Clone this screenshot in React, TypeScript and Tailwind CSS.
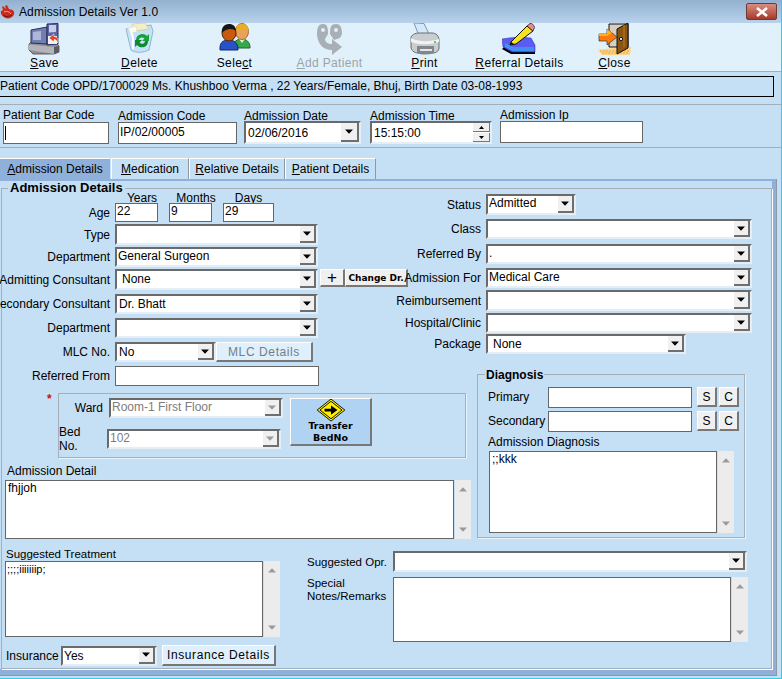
import React from "react";

const Arrow = ({ up = false, gray = false }: { up?: boolean; gray?: boolean }) => (
  <svg width="8" height="5" viewBox="0 0 8 5" className={up ? "rotate-180" : ""}>
    <path d="M0 0.5H8L4 4.8Z" fill={gray ? "#9a9a9a" : "#000"} />
  </svg>
);

function Combo({ className = "", children, disabled = false, btn = "w-[16px]", text = "pl-[1px]" }: { className?: string; children?: React.ReactNode; disabled?: boolean; btn?: string; text?: string }) {
  return (
    <div className={`flex h-[20px] shrink-0 border-2 border-t-[#6a6a6a] border-l-[#6a6a6a] border-r-[#e6eef5] border-b-[#e6eef5] bg-white ${className}`}>
      <div className={`flex-1 overflow-hidden whitespace-nowrap leading-[15px] ${text} ${disabled ? "text-[#7d7d7d]" : "text-black"}`}>{children}</div>
      <div className={`flex items-center justify-center bg-[#f0f0f0] border-r-2 border-b-2 border-[#6f6f6f] ${btn}`}>
        <Arrow gray={disabled} />
      </div>
    </div>
  );
}

function Input({ className = "", children }: { className?: string; children?: React.ReactNode }) {
  return (
    <div className={`shrink-0 border border-[#666] bg-white pl-[1px] leading-[15px] whitespace-nowrap overflow-hidden ${className}`}>{children}</div>
  );
}

function Btn({ className = "", children }: { className?: string; children?: React.ReactNode }) {
  return (
    <div className={`flex shrink-0 items-center justify-center border-t border-l border-white border-r-2 border-b-2 border-r-[#777] border-b-[#777] ${className}`}>{children}</div>
  );
}

function Scroll({ className = "" }: { className?: string }) {
  return (
    <div className={`flex w-[16px] shrink-0 flex-col items-center justify-between bg-[#ececec] py-[7px] ${className}`}>
      <Arrow up gray />
      <Arrow gray />
    </div>
  );
}

function Row({ label, className = "", lw = "w-[108px]", children }: { label: string; className?: string; lw?: string; children: React.ReactNode }) {
  return (
    <div className={`flex items-center ${className}`}>
      <div className={`flex shrink-0 justify-end whitespace-nowrap ${lw}`}>{label}</div>
      <div className="ml-[5px] flex shrink-0 items-stretch">{children}</div>
    </div>
  );
}

const SaveIcon = () => (
  <svg width="33" height="32" viewBox="0 0 33 32">
    <path d="M1 21L6 17H26L31 23V29L26 31H5L1 27Z" fill="#8f8f95" stroke="#44444c" strokeWidth=".8" />
    <path d="M1 21.5L26 24V31L1 27Z" fill="#b3b3b8" />
    <path d="M26 24L31 23V29L26 31Z" fill="#5b5b63" />
    <path d="M3 7L19 4V21L3 20Z" fill="#6f7fb2" stroke="#2b2f55" />
    <path d="M5 9L13 8V17L5 17Z" fill="#aeb7d8" />
    <path d="M19 1L30 0.5V21L19 22Z" fill="#5a66a8" stroke="#2a2d58" />
    <path d="M21 2H28V9L21 9.5Z" fill="#c9cde3" />
    <path d="M20 13H29V21H20Z" fill="#eef0f7" />
    <path d="M21 15L26 11V13.5C30 13.5 31 17 29.5 20C29 17.5 28 16.5 26 16.5V19Z" fill="#e0451f" stroke="#fff" strokeWidth=".5" />
  </svg>
);
const BinIcon = () => (
  <svg width="29" height="30" viewBox="0 0 29 30">
    <path d="M1 6L26 2L28 8L24 27C18 30 10 30 6 27Z" fill="#c5e2f7" stroke="#8fb6d6" />
    <path d="M7 1L20 0L24 6L10 8Z" fill="#f7efc4" stroke="#c9c48d" strokeWidth=".6" />
    <path d="M3 5L11 3L12 9L5 10Z" fill="#fbfbf2" stroke="#c8d2d8" strokeWidth=".5" />
    <path d="M6 9C9 14 8 20 8 26" stroke="#fff" strokeWidth="2" fill="none" />
    <path d="M11 17C11 11 19 9 22 13L24 11V18H17L19.5 15.5C17 13.5 14 15 14 17Z" fill="#18a33a" />
    <path d="M23 18C23 25 15 26 12 22L10 24V17H17L14.5 19.5C17 22 20 20.5 20 18Z" fill="#0e8a2f" />
  </svg>
);
const PeopleIcon = () => (
  <svg width="32" height="28" viewBox="0 0 32 28">
    <path d="M14 24C14 18 19 16 23 16C27 16 31 19 31 24V25H14Z" fill="#38a84a" stroke="#1c6a2c" />
    <path d="M20 16L23 20L26 16Z" fill="#dff2d8" />
    <ellipse cx="23" cy="8.5" rx="6.5" ry="8" fill="#e9a25a" stroke="#a86a28" />
    <path d="M17 8C17 3 20 1 23 1C27 1 29.5 3.5 29.5 8C27 5 21 5 17 8Z" fill="#e8b020" />
    <path d="M1 25C1 18 6 17 10 17C15 17 19 20 19 26V27H1Z" fill="#2a52c8" stroke="#14266e" />
    <ellipse cx="10" cy="10" rx="7" ry="8" fill="#c85a10" stroke="#53270a" />
    <path d="M3 10C2 4 6 1 10 1C14 1 17 3.5 17 8C14 5 7 5 3 10Z" fill="#161616" />
  </svg>
);
const AddIcon = () => (
  <svg width="28" height="32" viewBox="0 0 28 32">
    <path d="M1 12C1 5 2 1 7 1C12 1 12 6 12 11L9 16C9 19 12 21 16 21V16L26 24L16 32V27C8 27 2 22 1 12Z" fill="#a9b0b5" />
    <path d="M14 11C14 4 15 1 20 1C25 1 26 6 26 11L24 15L18 17Z" fill="#a9b0b5" />
    <circle cx="7" cy="7" r="2" fill="#e4eef5" />
    <circle cx="20" cy="7" r="2" fill="#e4eef5" />
  </svg>
);
const PrintIcon = () => (
  <svg width="30" height="32" viewBox="0 0 30 32">
    <path d="M4 0L14 0.5L20 13H9Z" fill="#d4e8fb" stroke="#7d97ad" />
    <path d="M1 15C1 12 5 10 9 10H22C26 10 29 13 29 17V25C29 28 26 30 23 30H8C4 30 1 27 1 24Z" fill="#c9cdd0" stroke="#6a6f73" />
    <path d="M1 15C8 19 20 19 29 16V19C20 22 9 22 1 19Z" fill="#f0f2f3" />
    <path d="M7 23H24V30C18 32 12 32 7 30Z" fill="#80868b" />
    <path d="M10 26H22V28H10Z" fill="#e3e5e6" />
    <circle cx="25" cy="19" r="1" fill="#3ab54a" />
  </svg>
);
const ReferralIcon = () => (
  <svg width="35" height="32" viewBox="0 0 35 32">
    <path d="M0 26L9 31H33V26H12L4 22Z" fill="#000" />
    <path d="M0 16L7 15L17 14L29 15L33 22V29H10L1 24Z" fill="#5a5cf2" stroke="#2a2ab4" strokeWidth=".5" />
    <path d="M3 21L11 25H32M3 23L11 27H32" stroke="#2cc1f7" strokeWidth="1" fill="none" />
    <path d="M9 19L25 3L31 8L14 21L8 22Z" fill="#f7e21f" stroke="#111" strokeWidth="1" />
    <path d="M25 3L28 0.5C30 0 32 2 32.5 4.5L31 8Z" fill="#f08a8a" stroke="#111" strokeWidth=".7" />
    <path d="M8 22L9 19L12 21Z" fill="#111" />
  </svg>
);
const CloseIcon = () => (
  <svg width="33" height="32" viewBox="0 0 33 32">
    <path d="M0 27L4 32H32L33 24H22Z" fill="#fbd48a" />
    <path d="M2 28H31M4 30H30" stroke="#f1a23c" strokeWidth="1" strokeDasharray="2 1" />
    <path d="M11 1H30V24H11Z" fill="#d8cfc1" stroke="#111" />
    <path d="M19 6L30 0V25L19 31Z" fill="#8b5510" stroke="#111" />
    <path d="M26 2V24" stroke="#b87d24" />
    <circle cx="23" cy="16" r="1.6" fill="#fff" stroke="#111" />
    <path d="M1 11H9V6L19 14L9 22V18H1Z" fill="#fb7a0c" stroke="#333" strokeWidth=".7" />
    <path d="M1 11H9V6L14 10L9 13H1Z" fill="#fdb021" />
  </svg>
);
const HeartIcon = () => (
  <svg width="15" height="14" viewBox="0 0 15 14">
    <path d="M1 6C0 10 4 13 8 13.5C12 13 15 10 14 7C13 4 11 5 9 4L7 0L5 1L6 4L3 1L2 2L3 5Z" fill="#c92a1e" />
    <path d="M4 7C6 6 9 6 11 9" stroke="#f5b5a0" fill="none" />
    <path d="M3 10C5 12 9 12 12 10" stroke="#7a120c" fill="none" />
  </svg>
);
const SignIcon = () => (
  <svg width="32" height="25" viewBox="0 0 32 25">
    <path d="M16 0L31 12L16 24L1 12Z" fill="#ffee00" stroke="#000" />
    <path d="M16 2.5L28 12L16 21.5L4 12Z" fill="none" stroke="#000" />
    <path d="M9 10.5H16V7L23 12L16 17V13.5H9Z" fill="#000" />
  </svg>
);

const tools: { icon: React.ReactNode; pre: string; u: string; post: string; muted?: boolean }[] = [
  { icon: <SaveIcon />, pre: "", u: "S", post: "ave" },
  { icon: <BinIcon />, pre: "", u: "D", post: "elete" },
  { icon: <PeopleIcon />, pre: "Sele", u: "c", post: "t" },
  { icon: <AddIcon />, pre: "", u: "A", post: "dd Patient", muted: true },
  { icon: <PrintIcon />, pre: "", u: "P", post: "rint" },
  { icon: <ReferralIcon />, pre: "", u: "R", post: "eferral Details" },
  { icon: <CloseIcon />, pre: "", u: "C", post: "lose" },
];

export default function App() {
  return (
    <div className="flex h-[679px] w-[782px] flex-col overflow-hidden border-r border-b border-r-[#2fd0e6] border-b-[#2fd0e6] bg-[#c5dff4] font-['Liberation_Sans',Arial,sans-serif] text-[12px] leading-[14px] text-black">
      {/* title bar */}
      <div className="flex h-[23px] shrink-0 items-center bg-gradient-to-b from-[#94b0cf] to-[#b8d2ec]">
        <HeartIcon />
        <span className="ml-[4px] text-[12px] tracking-[0.1px]">Admission Details Ver 1.0</span>
        <div className="ml-auto mr-[4px] flex h-[17px] w-[31px] items-center justify-center rounded-[2px] border border-[#6b3a36] bg-gradient-to-b from-[#d98c80] to-[#a63a2c]">
          <svg width="14" height="10" viewBox="0 0 14 10"><path d="M2 1L12 9M12 1L2 9" stroke="#fff" strokeWidth="2.6" /></svg>
        </div>
      </div>

      {/* toolbar */}
      <div className="flex h-[49px] shrink-0 border-b border-b-[#a5aeb6] bg-[#e0f1fc] pl-[-3px]">
        <div className="-ml-[3px] flex">
          {tools.map((t) => (
            <div key={t.post} className="flex w-[95px] flex-col items-center">
              <div className="flex h-[32px] items-start">{t.icon}</div>
              <div className={`mt-[1px] whitespace-nowrap tracking-[0.35px] ${t.muted ? "text-[#9aa3a8]" : ""}`}>
                {t.pre}<u>{t.u}</u>{t.post}
              </div>
            </div>
          ))}
        </div>
      </div>

      {/* patient strip */}
      <div className="h-[33px] shrink-0 border-b border-b-[#a5aeb6] pt-[4px]">
        <div className="-ml-[1px] flex h-[21px] w-[775px] items-center border border-black pb-[2px] whitespace-nowrap">
          Patient Code OPD/1700029 Ms. Khushboo Verma , 22 Years/Female, Bhuj, Birth Date 03-08-1993
        </div>
      </div>

      {/* top fields */}
      <div className="flex h-[43px] shrink-0 border-b border-b-[#a5aeb6] pl-[3px]">
        <div className="flex w-[115px] shrink-0 flex-col pt-[3px]">
          <div className="h-[14px]">Patient Bar Code</div>
          <Input className="h-[22px] w-[106px]"><span className="mt-[3px] block h-[14px] w-[1px] bg-black" /></Input>
        </div>
        <div className="flex w-[126px] shrink-0 flex-col pt-[4px]">
          <div className="h-[13px]">Admission Code</div>
          <Input className="h-[22px] w-[119px] pt-[2px]">IP/02/00005</Input>
        </div>
        <div className="flex w-[126px] shrink-0 flex-col pt-[4px]">
          <div className="h-[12px]">Admission Date</div>
          <Combo className="h-[23px] w-[117px]" text="pl-[2px] pt-[3px]" btn="w-[18px]">02/06/2016</Combo>
        </div>
        <div className="flex w-[130px] shrink-0 flex-col pt-[4px]">
          <div className="h-[12px]">Admission Time</div>
          <div className="flex h-[23px] w-[122px] border-2 border-t-[#6a6a6a] border-l-[#6a6a6a] border-r-[#e6eef5] border-b-[#e6eef5] bg-white">
            <div className="flex-1 pl-[2px] pt-[3px]">15:15:00</div>
            <div className="flex w-[17px] flex-col gap-[1px]">
              <div className="flex flex-1 items-center justify-center border-r border-b border-[#777] bg-[#f0f0f0]"><svg width="5" height="3" viewBox="0 0 5 3"><path d="M0 3H5L2.5 0Z" /></svg></div>
              <div className="flex flex-1 items-center justify-center border-r border-b border-[#777] bg-[#f0f0f0]"><svg width="5" height="3" viewBox="0 0 5 3"><path d="M0 0H5L2.5 3Z" /></svg></div>
            </div>
          </div>
        </div>
        <div className="flex shrink-0 flex-col pt-[3px]">
          <div className="h-[13px]">Admission Ip</div>
          <Input className="h-[22px] w-[143px]" />
        </div>
      </div>

      {/* tabs */}
      <div className="mt-[10px] flex h-[21px] shrink-0">
        <div className="flex w-[110px] items-center justify-center border-t border-t-white bg-[#8fb0da]"><span><u>A</u>dmission Details</span></div>
        <div className="ml-[1px] flex w-[78px] items-center justify-center border-t border-l border-r border-t-white border-l-white border-r-[#8d98a3]"><span><u>M</u>edication</span></div>
        <div className="flex w-[96px] items-center justify-center border-t border-l border-r border-t-white border-l-white border-r-[#8d98a3]"><span><u>R</u>elative Details</span></div>
        <div className="flex w-[91px] items-center justify-center border-t border-l border-r border-t-white border-l-white border-r-[#8d98a3]"><span><u>P</u>atient Details</span></div>
      </div>

      {/* tab page */}
      <div className="h-[497px] w-[777px] shrink-0 border-r border-b border-r-[#8d98a3] border-b-[#8d98a3]">
        <div className="h-[496px] border-t-2 border-r-[4px] border-b-[6px] border-[#8fb0da] pt-[7px]">
          <div className="relative ml-[1px] h-[481px] w-[771px] border border-[#a4afba] shadow-[1px_1px_0_#fff]">
            <div className="absolute -top-[8px] left-[6px] bg-[#c5dff4] px-[2px] text-[13px] font-bold">Admission Details</div>

            <div className="flex">
              {/* left column */}
              <div className="w-[470px] shrink-0">
                <div className="flex h-[14px] pl-[113px] pt-[2px]">
                  <div className="w-[54px] text-center">Years</div>
                  <div className="w-[54px] text-center">Months</div>
                  <div className="w-[51px] text-center">Days</div>
                </div>
                <div className="flex h-[19px] items-center">
                  <div className="flex w-[108px] justify-end">Age</div>
                  <Input className="ml-[5px] h-[19px] w-[43px]">22</Input>
                  <Input className="ml-[11px] h-[19px] w-[43px]">9</Input>
                  <Input className="ml-[11px] h-[19px] w-[51px]">29</Input>
                </div>
                <Row label="Type" className="mt-[2px]"><Combo className="h-[21px] w-[203px]" /></Row>
                <Row label="Department" className="mt-[2px]"><Combo className="w-[203px]">General Surgeon</Combo></Row>
                <Row label="Admitting Consultant" className="mt-[2px] h-[21px]">
                  <Combo className="h-[21px] w-[203px]" text="pl-[5px] pt-[1px]">None</Combo>
                  <Btn className="ml-[2px] h-[18px] w-[25px] bg-[#f0f0f0]"><span className="text-[17px] leading-[16px]">+</span></Btn>
                  <Btn className="h-[18px] w-[63px] bg-[#f0f0f0] font-['DejaVu_Sans',sans-serif] text-[9px] font-bold">Change Dr.</Btn>
                </Row>
                <Row label="Secondary Consultant" className="mt-[4px]"><Combo className="w-[203px]" text="pl-[2px] pt-[1px]">Dr. Bhatt</Combo></Row>
                <Row label="Department" className="mt-[4px]"><Combo className="w-[203px]" /></Row>
                <Row label="MLC No." className="mt-[4px]">
                  <Combo className="w-[101px]" text="pl-[2px] pt-[1px]">No</Combo>
                  <Btn className="h-[20px] w-[97px] bg-[#dfeffb] tracking-[0.6px] text-[#6f7f8c]">MLC Details</Btn>
                </Row>
                <Row label="Referred From" className="mt-[4px]"><Input className="h-[20px] w-[204px]" /></Row>

                <div className="relative ml-[56px] mt-[7px] h-[65px] w-[408px] border border-[#a4afba] shadow-[1px_1px_0_#e8f2fa]">
                  <div className="absolute -left-[12px] -top-[1px] text-[12px] font-bold leading-[12px] text-[#d01010]">*</div>
                  <div className="flex pt-[4px]">
                    <div className="w-[224px] shrink-0">
                      <div className="flex items-center">
                        <div className="flex w-[44px] justify-end">Ward</div>
                        <Combo disabled className="ml-[6px] w-[174px]" text="pl-[1px]">Room-1 First Floor</Combo>
                      </div>
                      <div className="mt-[7px] flex items-center">
                        <div className="flex w-[43px] justify-end">Bed No.</div>
                        <Combo disabled className="ml-[5px] w-[174px]" text="pl-[1px]">102</Combo>
                      </div>
                    </div>
                    <Btn className="ml-[7px] h-[48px] w-[82px] flex-col bg-[#b0d3f3] font-['DejaVu_Sans',sans-serif] text-[9.5px] font-bold leading-[12px]">
                      <SignIcon />
                      <span className="-mt-[2px] text-center">Transfer<br />BedNo</span>
                    </Btn>
                  </div>
                </div>

                <div className="ml-[5px] mt-[6px] h-[14px]">Admission Detail</div>
                <div className="ml-[3px] mt-[2px] flex h-[59px]">
                  <Input className="w-[449px]"><span className="pl-[1px]">fhjjoh</span></Input>
                  <Scroll className="ml-[1px]" />
                </div>
              </div>

              {/* right column */}
              <div className="-ml-[62px] w-[350px] shrink-0">
                <Row label="Status" lw="w-[71px]" className="mt-[5px]"><Combo className="h-[21px] w-[90px]">Admitted</Combo></Row>
                <Row label="Class" lw="w-[71px]" className="mt-[4px]"><Combo className="w-[266px]" /></Row>
                <Row label="Referred By" lw="w-[71px]" className="mt-[5px]"><Combo className="w-[266px]">.</Combo></Row>
                <Row label="Admission For" lw="w-[71px]" className="mt-[4px]"><Combo className="w-[266px]">Medical Care</Combo></Row>
                <Row label="Reimbursement" lw="w-[71px]" className="mt-[2px]"><Combo className="h-[21px] w-[266px]" /></Row>
                <Row label="Hospital/Clinic" lw="w-[71px]" className="mt-[2px]"><Combo className="w-[266px]" /></Row>
                <Row label="Package" lw="w-[71px]" className="mt-[1px]"><Combo className="w-[200px]" text="pl-[5px] pt-[1px]">None</Combo></Row>

                <div className="relative ml-[67px] mt-[20px] h-[164px] w-[268px] border border-[#a4afba] shadow-[1px_1px_0_#e8f2fa]">
                  <div className="absolute -top-[7px] left-[7px] bg-[#c5dff4] px-[1px] font-bold">Diagnosis</div>
                  <div className="mt-[12px] flex items-start">
                    <div className="ml-[10px] w-[60px] pt-[3px]">Primary</div>
                    <Input className="h-[21px] w-[144px]" />
                    <Btn className="ml-[5px] h-[20px] w-[20px] bg-[#f0f0f0]">S</Btn>
                    <Btn className="ml-[2px] h-[20px] w-[20px] bg-[#f0f0f0]">C</Btn>
                  </div>
                  <div className="mt-[3px] flex items-start">
                    <div className="ml-[10px] w-[60px] pt-[3px]">Secondary</div>
                    <Input className="h-[21px] w-[144px]" />
                    <Btn className="ml-[5px] h-[20px] w-[20px] bg-[#f0f0f0]">S</Btn>
                    <Btn className="ml-[2px] h-[20px] w-[20px] bg-[#f0f0f0]">C</Btn>
                  </div>
                  <div className="ml-[10px] mt-[3px] h-[14px]">Admission Diagnosis</div>
                  <div className="ml-[11px] mt-[2px] flex h-[82px]">
                    <Input className="w-[228px]"><span className="pl-[1px]">;;kkk</span></Input>
                    <Scroll className="ml-[1px]" />
                  </div>
                </div>
              </div>
            </div>

            {/* bottom section */}
            <div className="flex">
              <div className="w-[305px] shrink-0">
                <div className="ml-[4px] mt-[8px] h-[14px] text-[11.5px]">Suggested Treatment</div>
                <div className="ml-[3px] flex h-[76px]">
                  <Input className="w-[258px] text-[11px]">;;;;iiiiiiip;</Input>
                  <Scroll className="ml-[1px]" />
                </div>
                <div className="mt-[8px] flex h-[21px] items-center">
                  <div className="ml-[4px] w-[55px]">Insurance</div>
                  <Combo className="w-[96px]" text="pl-[1px] pt-[1px]">Yes</Combo>
                  <Btn className="ml-[5px] h-[21px] w-[114px] bg-[#dfeffb] tracking-[0.6px]">Insurance Details</Btn>
                </div>
              </div>
              <div className="pt-[12px]">
                <div className="flex items-center">
                  <div className="w-[86px] text-[11.5px]">Suggested Opr.</div>
                  <Combo className="h-[21px] w-[354px]" />
                </div>
                <div className="mt-[5px] flex">
                  <div className="w-[86px] pt-[0px] text-[11.5px] leading-[13px]">Special<br />Notes/Remarks</div>
                  <Input className="h-[65px] w-[338px]" />
                  <Scroll className="ml-[1px]" />
                </div>
              </div>
            </div>
          </div>
        </div>
      </div>
    </div>
  );
}
